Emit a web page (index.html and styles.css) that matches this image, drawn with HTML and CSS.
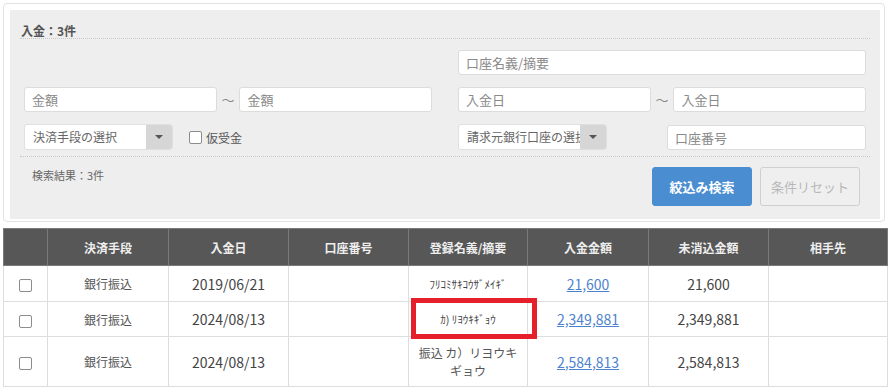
FILE: index.html
```html
<!DOCTYPE html>
<html lang="ja">
<head>
    <meta charset="UTF-8">
    <meta name="viewport" content="width=device-width, initial-scale=1.0">
    <title>入金一覧</title>
    <link rel="stylesheet" href="styles.css">
</head>
<body>

    <!-- Search conditions -->
    <div class="search-card">
        <div class="search-panel">
            <div class="panel-title">入金：3件</div>

            <div class="filter-grid">
                <div class="filter-cell"></div>
                <div class="filter-cell">
                    <input type="text" class="field field-wide" placeholder="口座名義/摘要">
                </div>

                <div class="filter-cell">
                    <input type="text" class="field" placeholder="金額">
                    <span class="tilde">〜</span>
                    <input type="text" class="field" placeholder="金額">
                </div>
                <div class="filter-cell">
                    <input type="text" class="field" placeholder="入金日">
                    <span class="tilde">〜</span>
                    <input type="text" class="field" placeholder="入金日">
                </div>

                <div class="filter-cell">
                    <div class="select-box">
                        <span class="select-text">決済手段の選択</span>
                        <span class="select-arrow"></span>
                    </div>
                    <label class="check-label"><span class="check"></span>仮受金</label>
                </div>
                <div class="filter-cell spread">
                    <div class="select-box">
                        <span class="select-text">請求元銀行口座の選択</span>
                        <span class="select-arrow"></span>
                    </div>
                    <input type="text" class="field field-account" placeholder="口座番号">
                </div>
            </div>

            <div class="panel-footer">
                <span class="result-count">検索結果：3件</span>
                <div class="actions">
                    <button class="btn btn-search">絞込み検索</button>
                    <button class="btn btn-reset">条件リセット</button>
                </div>
            </div>
        </div>
    </div>

    <!-- Result table -->
    <div class="result-wrap">
        <table class="result-table">
            <colgroup>
                <col style="width: 44px">
                <col style="width: 121px">
                <col style="width: 120px">
                <col style="width: 120px">
                <col style="width: 119px">
                <col style="width: 121px">
                <col style="width: 120px">
                <col style="width: 119px">
            </colgroup>
            <thead>
                <tr>
                    <th></th>
                    <th>決済手段</th>
                    <th>入金日</th>
                    <th>口座番号</th>
                    <th>登録名義/摘要</th>
                    <th>入金金額</th>
                    <th>未消込金額</th>
                    <th>相手先</th>
                </tr>
            </thead>
            <tbody>
                <tr class="row-a">
                    <td><span class="check"></span></td>
                    <td class="method">銀行振込</td>
                    <td class="num">2019/06/21</td>
                    <td></td>
                    <td class="kana">ﾌﾘｺﾐｻｷｺｳｻﾞﾒｲｷﾞ</td>
                    <td class="num"><a href="#">21,600</a></td>
                    <td class="num">21,600</td>
                    <td></td>
                </tr>
                <tr class="row-b">
                    <td><span class="check"></span></td>
                    <td class="method">銀行振込</td>
                    <td class="num">2024/08/13</td>
                    <td></td>
                    <td class="kana">ｶ) ﾘﾖｳｷｷﾞｮｳ</td>
                    <td class="num"><a href="#">2,349,881</a></td>
                    <td class="num">2,349,881</td>
                    <td></td>
                </tr>
                <tr class="row-c">
                    <td><span class="check"></span></td>
                    <td class="method">銀行振込</td>
                    <td class="num">2024/08/13</td>
                    <td></td>
                    <td class="name">振込 カ）リヨウキ<br>ギョウ</td>
                    <td class="num"><a href="#">2,584,813</a></td>
                    <td class="num">2,584,813</td>
                    <td></td>
                </tr>
            </tbody>
        </table>

        <!-- highlight over the second row -->
        <div class="highlight"></div>
    </div>

</body>
</html>
```

FILE: styles.css
```css
/* Basic styling */
body {
    margin: 0;
    background: #ffffff;
    color: #444;
    font-family: "Noto Sans CJK JP", "Noto Sans", sans-serif;
}

/* Search card */
.search-card {
    margin: 3px 6px 0 3px;
    border: 1px solid #e2e2e2;
    border-radius: 4px;
    padding: 6px 4px 2px 6px;
}
.search-panel {
    background: #eeeeee;
    padding-bottom: 13px;
}
.panel-title {
    margin: 0 10px;
    padding: 14px 1px 0;
    height: 14px;
    line-height: 14px;
    font-size: 12px;
    font-weight: bold;
    color: #555;
    border-bottom: 1px dotted #c8c8c8;
}

.filter-grid {
    display: grid;
    grid-template-columns: 408px 408px;
    grid-template-rows: 25px 25px 26px;
    column-gap: 26px;
    row-gap: 12px;
    padding: 0 14px;
    margin-top: 11px;
}
.filter-cell {
    display: flex;
    align-items: center;
}
.filter-cell.spread {
    justify-content: space-between;
}
.field {
    width: 193px;
    height: 25px;
    box-sizing: border-box;
    border: 1px solid #dcdcdc;
    border-radius: 3px;
    background: #fff;
    padding: 0 7px;
    font-family: inherit;
    font-size: 13px;
    color: #333;
    outline: none;
}
.field::placeholder {
    color: #8a8a8a;
}
.field-wide {
    width: 408px;
}
.field-account {
    width: 199px;
}
.tilde {
    width: 23px;
    text-align: center;
    font-size: 13px;
    color: #888;
}

.select-box {
    display: flex;
    width: 149px;
    height: 26px;
    box-sizing: border-box;
    border: 1px solid #e0e0e0;
    border-radius: 3px;
    background: #fff;
    overflow: hidden;
}
.select-text {
    flex: 1;
    overflow: hidden;
    white-space: nowrap;
    padding-left: 8px;
    line-height: 24px;
    font-size: 12px;
    color: #666;
}
.select-arrow {
    width: 26px;
    background: #d6d6d6;
    display: flex;
    align-items: center;
    justify-content: center;
}
.select-arrow::after {
    content: "";
    border-left: 4px solid transparent;
    border-right: 4px solid transparent;
    border-top: 4px solid #555;
}

.check {
    display: inline-block;
    width: 13px;
    height: 13px;
    box-sizing: border-box;
    border: 1px solid #8c8c8c;
    border-radius: 2px;
    background: #fff;
    vertical-align: middle;
}
.check-label {
    display: flex;
    align-items: center;
    margin-left: 16px;
    font-size: 12px;
    color: #555;
}
.check-label .check {
    margin-right: 4px;
}

.panel-footer {
    display: flex;
    justify-content: space-between;
    align-items: flex-start;
    margin: 6px 10px 0;
    padding: 10px 10px 0 12px;
    border-top: 1px dotted #c8c8c8;
}
.result-count {
    font-size: 11px;
    color: #666;
    line-height: 16px;
}
.actions {
    display: flex;
    gap: 8px;
}
.btn {
    width: 100px;
    height: 39px;
    border-radius: 3px;
    font-family: inherit;
    font-size: 13px;
    cursor: pointer;
}
.btn-search {
    background: #4a8ed1;
    border: 1px solid #4a8ed1;
    color: #fff;
    font-weight: bold;
}
.btn-reset {
    background: #efefef;
    border: 1px solid #cfcfcf;
    color: #b8b8b8;
}

/* Result table */
.result-wrap {
    position: relative;
    margin: 6px 4px 0 3px;
}
.result-table {
    width: 884px;
    border-collapse: collapse;
    table-layout: fixed;
}
.result-table th {
    height: 36px;
    padding: 0;
    background: #575757;
    color: #eeeeee;
    font-size: 12px;
    font-weight: bold;
    border: 1px solid #7a7a7a;
    text-align: center;
}
.result-table td {
    padding: 0 6px;
    border: 1px solid #dddddd;
    text-align: center;
    color: #555;
    font-size: 12px;
}
.row-a td {
    height: 35px;
}
.row-b td {
    height: 34px;
}
.row-c td {
    height: 49px;
}
.result-table .num {
    font-size: 14px;
    color: #444;
}
.result-table .kana {
    font-size: 11px;
    color: #444;
}
.result-table .name {
    line-height: 18px;
    color: #555;
}
.result-table a {
    color: #4d82cf;
    text-decoration: underline;
}

.highlight {
    position: absolute;
    left: 408px;
    top: 70px;
    width: 126px;
    height: 41px;
    box-sizing: border-box;
    border: 5px solid #e6202a;
}
```
